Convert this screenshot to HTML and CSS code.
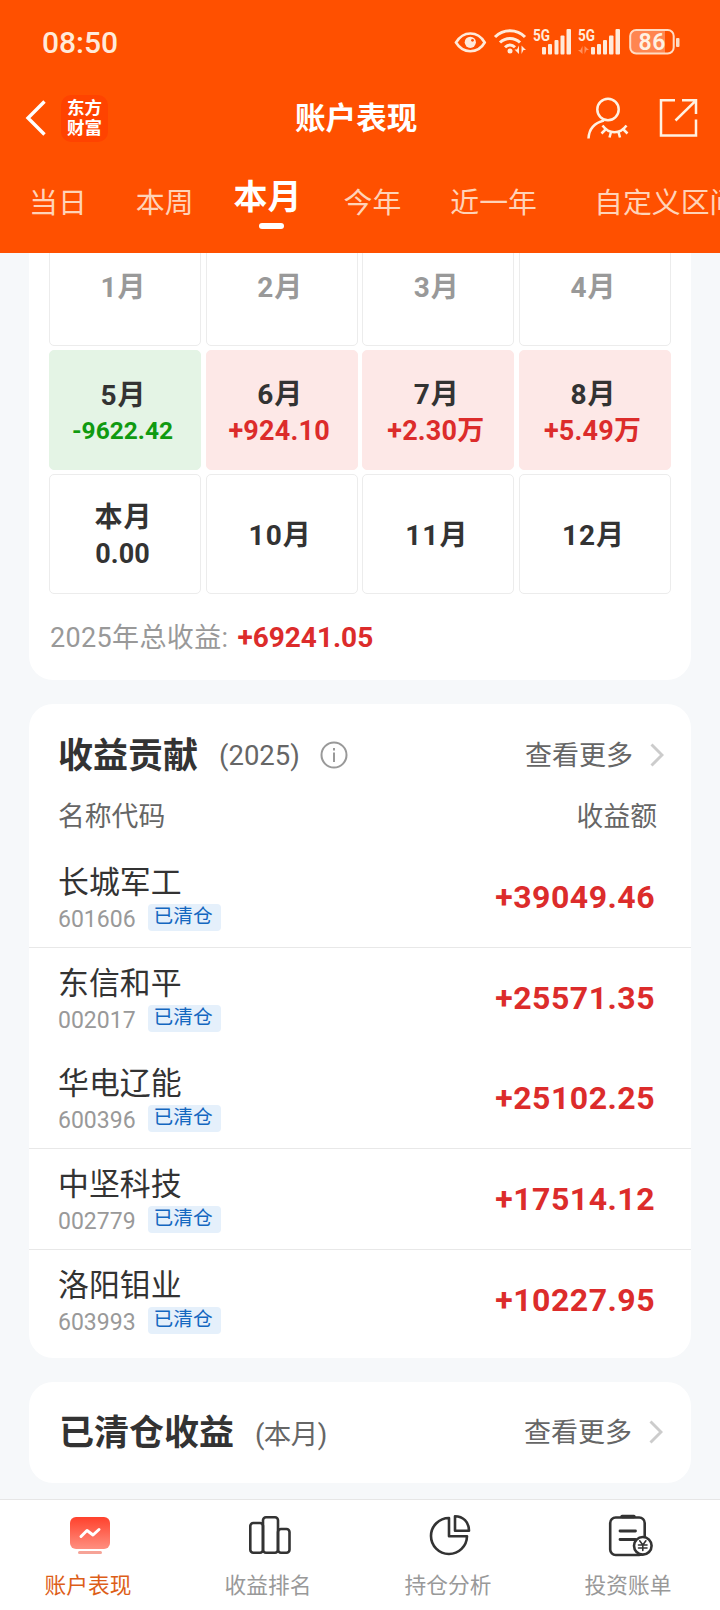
FILE: index.html
```
<!DOCTYPE html>
<html lang="zh-CN">
<head>
<meta charset="utf-8">
<title>账户表现</title>
<link rel="stylesheet" href="styles.css">
</head>
<body>
<div class="app">
  <header class="top">
    <div class="status">
      <span class="clock">08:50</span>
      <svg class="status-icons" width="228" height="30" viewBox="0 0 228 30" fill="none">
        <path d="M2 15.500C6 9 11 6.500 16.300 6.500S27 9 30.700 15.500C27 22 22 24.200 16.300 24.200S6 22 2 15.500Z" stroke="#ffeada" stroke-width="2.600"/>
        <circle cx="16.300" cy="15.300" r="5.600" fill="#ffeada"/>
        <circle cx="18.500" cy="13.300" r="1.400" fill="#ff5000"/>
        <g stroke="#ffeada" stroke-width="3">
          <path d="M41 10C49 1.500 63 1.500 71 10"/>
          <path d="M46 15.500C51.500 10 60.500 10 66 15.500"/>
          <path d="M51 20.300C54 17.300 58 17.300 61 20.300"/>
        </g>
        <circle cx="56" cy="24" r="2.500" fill="#ffeada"/>
        <path d="M65 18.500v8.500l-4.500-4.500h2.500zM67.500 27v-8.500l4.500 4.500h-2.500z" fill="#ffeada"/>
        <g fill="#ffeada">
          <rect x="88" y="20" width="4" height="7.500" rx="1"/><rect x="94" y="17" width="4" height="10.500" rx="1"/><rect x="100.500" y="13" width="4" height="14.500" rx="1"/><rect x="106.500" y="8.500" width="4" height="19" rx="1"/><rect x="112.500" y="2" width="4.500" height="25.500" rx="1"/>
          <rect x="137" y="20" width="4" height="7.500" rx="1"/><rect x="143" y="17" width="4" height="10.500" rx="1"/><rect x="149" y="13" width="4" height="14.500" rx="1"/><rect x="155" y="8.500" width="4.500" height="19" rx="1"/><rect x="161.500" y="2" width="4.500" height="25.500" rx="1"/>
        </g>
        <path d="M128.500 19v8l-4.500-4h2.500zM130.500 27v-8l4.500 4h-2.500z" fill="#ff9260"/>
        <text class="net" x="79" y="14" textLength="17" lengthAdjust="spacingAndGlyphs">5G</text>
        <text class="net" x="124" y="14" textLength="17" lengthAdjust="spacingAndGlyphs">5G</text>
        <path d="M182 3H211V27H182Q177 27 177 22V8Q177 3 182 3Z" fill="#ff8550"/>
        <rect x="176.200" y="3" width="43.500" height="23.500" rx="6" stroke="#ffdcc4" stroke-width="2"/>
        <rect x="222" y="11" width="3.500" height="9" rx="1" fill="#ffdcc4"/>
        <text class="batt" x="184.500" y="23.300" textLength="27">86</text>
      </svg>
    </div>
    <div class="nav">
      <svg class="back" width="24" height="40" viewBox="0 0 24 40" fill="none" stroke="#fff" stroke-width="3.400"><path d="M20.500 3.500 4 20 20.500 36.500"/></svg>
      <div class="logo"><span>东方</span><span>财富</span></div>
      <h1 class="title">账户表现</h1>
      <svg class="nav-icons" width="112" height="44" viewBox="0 0 112 44" fill="none" stroke="#fff1e2" stroke-width="2.500">
        <circle cx="22" cy="13.500" r="10.700"/>
        <path d="M18 24.500C8 27 3 33 2.500 42.500M16.500 29.500C23 38.500 34 38.500 40.500 29.500M19.500 33.500l-4 4M25 36l-1.500 5.500M32.500 36l1.500 5.500M37.500 33.500l4 4"/>
        <path d="M89 4.300H75V39.500H110V23.500M96 4.300H110V18M110 4.300 89.500 24.500"/>
      </svg>
    </div>
    <nav class="tabs">
      <span>当日</span><span>本周</span><span class="on">本月</span><span>今年</span><span>近一年</span><span>自定义区间</span>
    </nav>
  </header>

  <main class="content">
    <section class="card calendar">
      <div class="months">
        <div class="cell past"><b>1月</b></div>
        <div class="cell past"><b>2月</b></div>
        <div class="cell past"><b>3月</b></div>
        <div class="cell past"><b>4月</b></div>
        <div class="cell loss"><b>5月</b><i>-9622.42</i></div>
        <div class="cell gain"><b>6月</b><i>+924.10</i></div>
        <div class="cell gain"><b>7月</b><i>+2.30万</i></div>
        <div class="cell gain"><b>8月</b><i>+5.49万</i></div>
        <div class="cell now"><b>本月</b><i>0.00</i></div>
        <div class="cell"><b>10月</b></div>
        <div class="cell"><b>11月</b></div>
        <div class="cell"><b>12月</b></div>
      </div>
      <p class="total"><span>2025年总收益:</span><b>+69241.05</b></p>
    </section>

    <section class="card contrib">
      <div class="head">
        <h2>收益贡献</h2><span class="sub">(2025)</span>
        <svg class="info" width="28" height="28" viewBox="0 0 28 28" fill="none" stroke="#999" stroke-width="2"><circle cx="14" cy="14" r="12.500"/><path d="M14 11.500V21M14 7v2.500"/></svg>
        <span class="more">查看更多</span>
        <svg class="chev" width="14" height="24" viewBox="0 0 14 24" fill="none" stroke="#ccc" stroke-width="2.900"><path d="M1.500 1.500 12 12 1.500 22.500"/></svg>
      </div>
      <div class="cols"><span>名称代码</span><span>收益额</span></div>
      <div class="row line"><div><div class="name">长城军工</div><div class="code">601606<em>已清仓</em></div></div><strong>+39049.46</strong></div>
      <div class="row"><div><div class="name">东信和平</div><div class="code">002017<em>已清仓</em></div></div><strong>+25571.35</strong></div>
      <div class="row line"><div><div class="name">华电辽能</div><div class="code">600396<em>已清仓</em></div></div><strong>+25102.25</strong></div>
      <div class="row line"><div><div class="name">中坚科技</div><div class="code">002779<em>已清仓</em></div></div><strong>+17514.12</strong></div>
      <div class="row"><div><div class="name">洛阳钼业</div><div class="code">603993<em>已清仓</em></div></div><strong>+10227.95</strong></div>
    </section>

    <section class="card closed">
      <div class="head">
        <h2>已清仓收益</h2><span class="sub">(本月)</span>
        <span class="more">查看更多</span>
        <svg class="chev" width="14" height="24" viewBox="0 0 14 24" fill="none" stroke="#ccc" stroke-width="2.900"><path d="M1.500 1.500 12 12 1.500 22.500"/></svg>
      </div>
    </section>
  </main>

  <footer class="bar">
    <div class="item active">
      <svg width="48" height="46" viewBox="0 0 48 46" fill="none">
        <defs><linearGradient id="g" x1="0" y1="0" x2="0" y2="1"><stop offset="0" stop-color="#ff412c"/><stop offset="1" stop-color="#ff8f80"/></linearGradient></defs>
        <rect x="4" y="4" width="40" height="32" rx="6" fill="url(#g)"/>
        <path d="M15 23.500 21 17.500 27 22 33 16.500" stroke="#fff" stroke-width="3" stroke-linecap="round" stroke-linejoin="round"/>
        <rect x="12" y="38" width="24" height="3" rx="1.500" fill="#f6a397"/>
      </svg>
      <span>账户表现</span>
    </div>
    <div class="item">
      <svg width="48" height="46" viewBox="0 0 48 46" fill="none" stroke="#333" stroke-width="2.600">
        <rect x="4.300" y="10" width="12.700" height="29.700" rx="3"/>
        <rect x="32" y="16" width="11.500" height="23.700" rx="3"/>
        <rect x="17" y="4.200" width="15" height="35.500" rx="3"/>
      </svg>
      <span>收益排名</span>
    </div>
    <div class="item">
      <svg width="48" height="46" viewBox="0 0 48 46" fill="none" stroke="#333" stroke-width="2.600" stroke-linejoin="round">
        <path d="M23 5A18 18 0 1 0 41 23.300H23Z"/>
        <path d="M29 3.200V17.700H43C43 9 37 3.200 29 3.200Z"/>
      </svg>
      <span>持仓分析</span>
    </div>
    <div class="item">
      <svg width="48" height="46" viewBox="0 0 48 46" fill="none" stroke="#333" stroke-width="2.600" stroke-linecap="round">
        <rect x="4.200" y="4.500" width="34.500" height="37.500" rx="5.500"/>
        <path d="M16 3.500H28" stroke-width="3.400"/>
        <path d="M14 18H29.500M14 26.500H29.500" stroke-width="2.800"/>
        <circle cx="36.800" cy="32.800" r="8.800" fill="#fff"/>
        <path d="M33.700 27.800 36.800 32 39.900 27.800M36.800 32V37.500M32.500 32H41M32.500 35H41" stroke-width="1.600"/>
      </svg>
      <span>投资账单</span>
    </div>
  </footer>
</div>
</body>
</html>
```
FILE: styles.css
```
* { box-sizing: border-box; margin: 0; padding: 0; }
body { width: 720px; font-family: Roboto, "Noto Sans CJK SC", sans-serif; color: #333; background: #f6f8fa; }
svg { display: block; flex: none; }
b, i, em, strong { font-style: normal; }
.app { width: 720px; height: 1610px; display: flex; flex-direction: column; overflow: hidden; }

.top { flex: none; height: 253px; background: #ff5000; color: #fff; overflow: hidden; }
.status { height: 84px; padding: 27px 38px 0 42px; display: flex; justify-content: space-between; align-items: flex-start; }
.clock { font-size: 30px; line-height: 31px; font-weight: 500; color: #ffeada; }
.net { font: 700 16px Roboto, sans-serif; fill: #ffeada; }
.batt { font: 600 23px Roboto, sans-serif; fill: #fff1e2; }
.nav { height: 68px; padding: 0 22px 0 24px; display: flex; align-items: center; }
.logo { width: 47px; height: 47px; margin-left: 13px; padding-bottom: 2px; border-radius: 10px; background: #ff4300; display: flex; flex-direction: column; align-items: center; justify-content: center; font: 700 17.500px/20px "Noto Sans CJK SC", sans-serif; }
.title { flex: 1; font-size: 30.600px; line-height: 40px; font-weight: 700; padding: 2px 0 0 187px; white-space: nowrap; }
.tabs { height: 101px; padding: 25px 0 0 29px; display: flex; font-size: 28.900px; line-height: 52px; color: #ffd3b8; white-space: nowrap; }
.tabs span { flex: none; margin-right: 49px; }
.tabs span:nth-child(2) { margin-right: 40px; }
.tabs .on { font-size: 34px; line-height: 40px; font-weight: 700; color: #fff; margin-right: 42px; display: flex; flex-direction: column; align-items: center; }
.tabs .on::after { content: ""; width: 25px; height: 6px; margin-top: 6px; margin-left: 8px; border-radius: 3px; background: #fff; }
.tabs span:nth-child(5) { margin-right: 57px; }

.content { flex: none; height: 1246px; overflow: hidden; padding: 0 29px; }
.card { background: #fff; border-radius: 24px; margin-bottom: 24px; }
.calendar { margin-top: -47px; height: 474px; padding: 20px 20px 0; }
.months { display: grid; grid-template-columns: repeat(4, 1fr); grid-auto-rows: 120px; gap: 4px 4.670px; }
.cell { padding: 4px 3px 0 0; border: 1px solid #ececec; border-radius: 5px; display: flex; flex-direction: column; align-items: center; justify-content: center; }
.cell b { font-size: 28px; line-height: 36px; letter-spacing: 1px; }
.cell i { font-size: 27px; line-height: 36px; font-weight: 700; margin-right: 2px; }
.past { color: #999; }
.loss { background: #e4f4e5; border-color: #e4f4e5; padding-top: 5px; }
.gain { background: #fde8e7; border-color: #fde8e7; padding-top: 5px; }
.loss i { color: #109a10; font-size: 24.500px; line-height: 34px; }
.gain i { color: #dc2c2b; letter-spacing: .2px; }
.total { margin-top: 24px; padding-left: 1px; line-height: 40px; font-size: 27px; color: #999; display: flex; gap: 9px; }
.total span { letter-spacing: .35px; }
.total b { font-size: 28px; color: #dc2c2b; }

.contrib { height: 654px; padding-top: 26px; }
.head { height: 50px; padding: 0 27px 0 29px; display: flex; align-items: center; }
.head h2 { font-size: 35px; line-height: 50px; padding-top: 3px; }
.sub { font-size: 27.500px; color: #666; margin-left: 21px; }
.info { margin-left: 20px; }
.more { margin: 0 0 4px auto; font-size: 27px; color: #666; }
.chev { margin-left: 17px; }
.cols { height: 67px; padding: 17px 34px 0 29px; display: flex; justify-content: space-between; font-size: 26.800px; line-height: 40px; color: #666; }
.row { height: 100.700px; padding: 16px 36px 0 29px; display: flex; justify-content: space-between; }
.line { border-bottom: 1px solid #e8e8e8; }
.name { font-size: 30.900px; line-height: 40px; }
.code { display: flex; font-size: 23px; line-height: 34px; color: #999; }
.code em { height: 27px; width: 73px; margin: 1px 0 0 12px; padding-right: 2px; border-radius: 4px; background: #e5f0fb; color: #1467c0; font-size: 19.700px; line-height: 26px; text-align: center; }
.row strong { font-size: 32px; line-height: 68px; letter-spacing: .5px; color: #dc2c2b; }

.closed { height: 101px; padding-top: 25px; }
.closed .head { padding: 0 28px 0 30px; }
.closed .sub { letter-spacing: -.6px; }

.bar { flex: none; height: 111px; border-top: 1px solid #e6e6e6; background: #fff; display: flex; }
.item { width: 180px; padding-top: 13px; display: flex; flex-direction: column; align-items: center; }
.item span { margin: 11px 4px 0 0; font-size: 21.700px; line-height: 32px; color: #999; }
.active span { color: #dd5e18; }
```
